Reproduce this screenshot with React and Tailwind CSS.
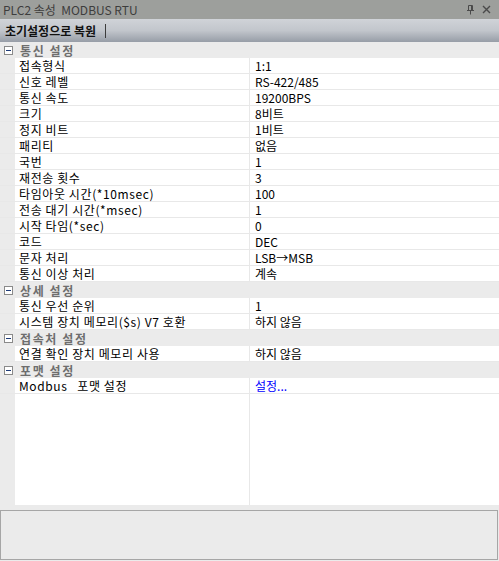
const SECTIONS = [
  {
    title: "통신 설정",
    rows: [
      ["접속형식", "1:1"],
      ["신호 레벨", "RS-422/485"],
      ["통신 속도", "19200BPS"],
      ["크기", "8비트"],
      ["정지 비트", "1비트"],
      ["패리티", "없음"],
      ["국번", "1"],
      ["재전송 횟수", "3"],
      ["타임아웃 시간(*10msec)", "100"],
      ["전송 대기 시간(*msec)", "1"],
      ["시작 타임(*sec)", "0"],
      ["코드", "DEC"],
      ["문자 처리", "LSB→MSB"],
      ["통신 이상 처리", "계속"],
    ],
  },
  {
    title: "상세 설정",
    rows: [
      ["통신 우선 순위", "1"],
      ["시스템 장치 메모리($s) V7 호환", "하지 않음"],
    ],
  },
  {
    title: "접속처 설정",
    rows: [["연결 확인 장치 메모리 사용", "하지 않음"]],
  },
  {
    title: "포맷 설정",
    rows: [["Modbus\u00a0\u00a0\u00a0포맷 설정", "설정...", true]],
  },
];

function Minus() {
  return (
    <span className="w-[9px] h-[9px] border border-[#8a8a8a] bg-white flex items-center justify-center">
      <span className="w-[5px] h-px bg-[#1c3a78]" />
    </span>
  );
}

function Category({ title }) {
  return (
    <div className="h-[16px] shrink-0 flex items-center bg-[#ebebeb]">
      <div className="w-[15px] flex justify-center pl-[1px]">
        <Minus />
      </div>
      <span className="pl-[5px] font-bold text-[#6e6e6e] text-[12px] leading-[15px] tracking-[1.6px]">{title}</span>
    </div>
  );
}

function Row({ name, value, link }) {
  return (
    <div className="h-[16px] shrink-0 flex border-b border-[#e8e8e8]">
      <div className="w-[15px] bg-[#ebebeb]" />
      <div className="w-[235px] border-r border-[#e8e8e8] pl-[4px] text-[12px] leading-[15px] tracking-[0.6px] text-black whitespace-nowrap">
        {name}
      </div>
      <div
        className={`flex-1 pl-[5px] text-[12px] leading-[15px] whitespace-nowrap ${
          link ? "text-[#0000ff]" : "text-black"
        }`}
      >
        {value}
      </div>
    </div>
  );
}

export default function App() {
  return (
    <div
      className="w-[499px] h-[561px] bg-[#ebebeb] flex flex-col overflow-hidden"
      style={{ fontFamily: '"Noto Sans CJK KR", "Noto Sans", sans-serif' }}
    >
      {/* title bar */}
      <div className="h-[19px] shrink-0 bg-[#9d9f9c] flex items-center justify-between pl-[3px] pr-[8px]">
        <span className="text-[12px] leading-[15px] text-[#3d3d3d]">PLC2 속성&nbsp;&nbsp;MODBUS RTU</span>
        <div className="flex items-center gap-[7px]">
          <svg width="9" height="10" viewBox="0 0 9 10" className="text-[#4a4a4a]">
            <path d="M2.5 0.5h4v5h-4z M1 5.5h7 M4.5 5.5v4" fill="none" stroke="currentColor" strokeWidth="1" />
            <path d="M5.5 0.5v5" stroke="currentColor" strokeWidth="1" />
          </svg>
          <svg width="9" height="9" viewBox="0 0 9 9" className="text-[#4a4a4a]">
            <path d="M1 1l7 7M8 1l-7 7" stroke="currentColor" strokeWidth="1.4" />
          </svg>
        </div>
      </div>

      {/* toolbar */}
      <div className="h-[23px] shrink-0 bg-gradient-to-b from-[#d0d3d8] via-[#c2c6cc] to-[#979da7] flex items-center pl-[5px]">
        <span className="text-[12px] leading-[15px] font-bold text-[#111]">초기설정으로 복원</span>
        <span className="ml-[9px] w-px h-[14px] bg-[#3c3c3c]" />
      </div>

      {/* property grid */}
      <div className="h-[463px] shrink-0 bg-white flex flex-col">
        {SECTIONS.map((s) => (
          <div key={s.title} className="flex flex-col">
            <Category title={s.title} />
            {s.rows.map(([n, v, link]) => (
              <Row key={n} name={n} value={v} link={link} />
            ))}
          </div>
        ))}
        <div className="flex-1 flex">
          <div className="w-[15px] bg-[#ebebeb]" />
          <div className="w-[235px] border-r border-[#e8e8e8]" />
          <div className="flex-1" />
        </div>
      </div>

      {/* description panel */}
      <div className="mt-[5px] h-[50px] shrink-0 mr-[1px] border border-[#a6a6a6] bg-[#ebebeb]" />
    </div>
  );
}
